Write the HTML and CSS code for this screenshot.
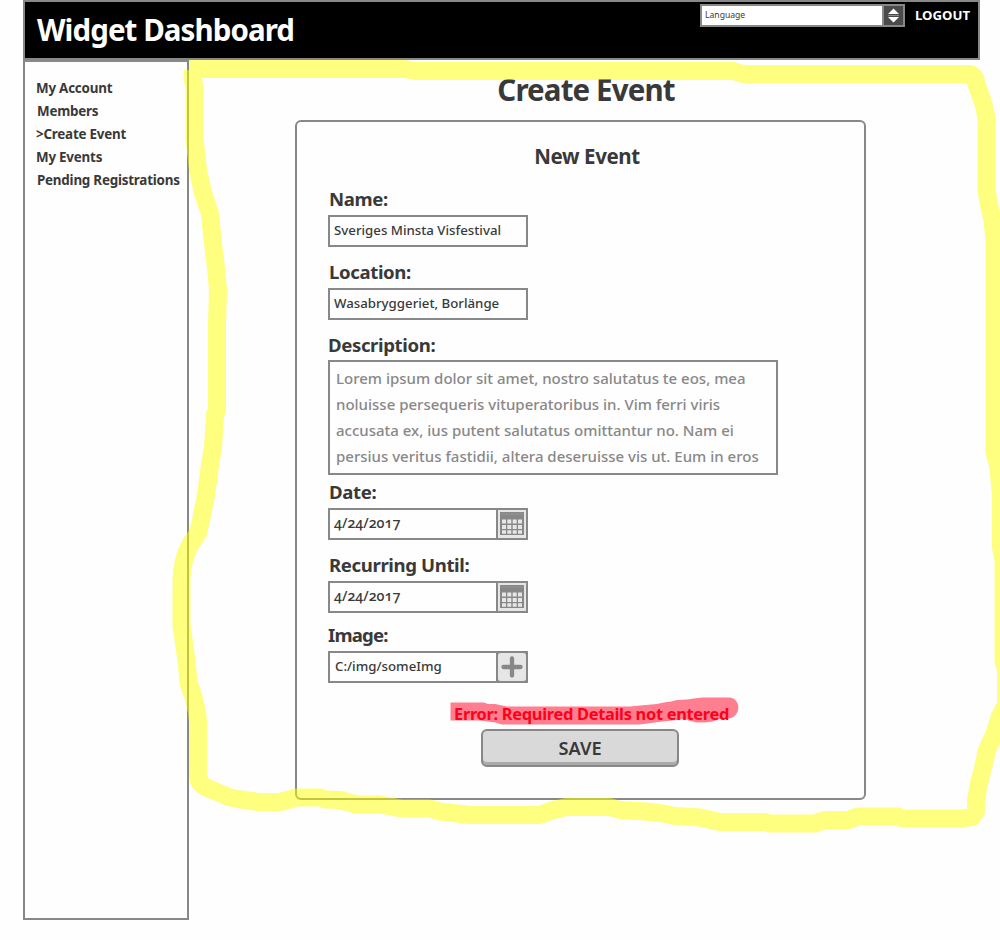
FILE: index.html
```html
<!DOCTYPE html>
<html lang="en">
<head>
<meta charset="utf-8">
<title>Widget Dashboard</title>
<link rel="stylesheet" href="styles.css">
</head>
<body>
<div class="page">
  <header class="topbar">
    <h1 class="brand">Widget Dashboard</h1>
    <div class="tools">
      <div class="select">
        <span class="select-value">Language</span>
        <span class="select-arrows">
          <svg width="19" height="19" viewBox="0 0 19 19"><path d="M4 8 9.500 2.500l5.500 5.500z M4 11h11L9.500 16.500z" fill="#fff"/><path d="M4 9.500h11" stroke="#888"/></svg>
        </span>
      </div>
      <a class="logout">LOGOUT</a>
    </div>
  </header>
  <div class="body">
    <nav class="sidebar">
      <a>My Account</a>
      <a class="in">Members</a>
      <a>&gt;Create Event</a>
      <a>My Events</a>
      <a class="in">Pending Registrations</a>
    </nav>
    <main class="content">
      <h2 class="heading">Create Event</h2>
      <form class="card">
        <h3 class="subheading">New Event</h3>
        <div class="field"><label class="in">Name:</label><div class="input"><span>Sveriges Minsta Visfestival</span></div></div>
        <div class="field"><label class="in">Location:</label><div class="input"><span>Wasabryggeriet, Borlänge</span></div></div>
        <div class="field field-text"><label>Description:</label>
          <div class="textarea">Lorem ipsum dolor sit amet, nostro salutatus te eos, mea<br>noluisse persequeris vituperatoribus in. Vim ferri viris<br>accusata ex, ius putent salutatus omittantur no. Nam ei<br>persius veritus fastidii, altera deseruisse vis ut. Eum in eros</div></div>
        <div class="field"><label class="in">Date:</label>
          <div class="input"><span class="date">4/24/2017</span>
            <i class="addon"><svg width="28" height="28" viewBox="0 0 28 28"><path d="M2 2h24v23H2z" fill="#888"/><path d="M3 4h22" stroke="#949494"/><path d="M4 9.500h4v4H4zm5.300 0h4v4h-4zm5.400 0h4v4h-4zm5.300 0h4v4h-4zM4 15h4v4H4zm5.300 0h4v4h-4zm5.400 0h4v4h-4zm5.300 0h4v4h-4zM4 20.200h4v3.500H4zm5.300 0h4v3.500h-4zm5.400 0h4v3.500h-4zm5.300 0h4v3.500h-4z" fill="#e6e6e6"/></svg></i></div></div>
        <div class="field field-recurring"><label class="in">Recurring Until:</label>
          <div class="input"><span class="date">4/24/2017</span>
            <i class="addon"><svg width="28" height="28" viewBox="0 0 28 28"><path d="M2 2h24v23H2z" fill="#888"/><path d="M3 4h22" stroke="#949494"/><path d="M4 9.500h4v4H4zm5.300 0h4v4h-4zm5.400 0h4v4h-4zm5.300 0h4v4h-4zM4 15h4v4H4zm5.300 0h4v4h-4zm5.400 0h4v4h-4zm5.300 0h4v4h-4zM4 20.200h4v3.500H4zm5.300 0h4v3.500h-4zm5.400 0h4v3.500h-4zm5.300 0h4v3.500h-4z" fill="#e6e6e6"/></svg></i></div></div>
        <div class="field"><label class="image-label">Image:</label>
          <div class="input"><span class="path">C:/img/someImg</span>
            <i class="addon"><svg width="28" height="28" viewBox="0 0 28 28"><path d="M0 0h28v28H0z" fill="#888"/><rect width="28" height="28" rx="2.500" fill="#e6e6e6"/><path d="M14 5.500v17M5.500 14h17" stroke="#888" stroke-width="4.300" stroke-linecap="round"/></svg></i></div></div>
        <p class="error">Error: Required Details not entered</p>
        <button class="save" type="button">SAVE</button>
      </form>
    </main>
  </div>
  <svg class="marker" width="1000" height="940" viewBox="0 0 1000 940" fill="none" stroke-width="18" stroke-linejoin="round">
    <path stroke="#ff0" stroke-opacity=".5" d="M189 69H405L415 71H733L743 74H967Q976 74 976 83L979 91 984 106 986.500 118V190L989 205 992.500 220 994.500 240V452L998 465 1001 495V547L1003.500 560V660L1006 670V705L1000 716 994 735 987 750 983 768 979 783 976 800V811L972 817 960 818.500H902L898 816.500H858L848 820H825L815 823.500H770L765 822H720L700 817.500 675 816 660 813 645 811.500 620 810 610 807H566L550 811 540 815H470L440 811.500 430 808.500H402L380 804.500H356L340 800 325 799.500 320 797.500H297L280 802H258L238 799 230 797.500 205 787Q198 783 198 775V722L197 712 193 695 188.500 683 187 665 185 650 181.500 626V580Q182 560 190 545L198 533 201 520 206 495 210 465 213 448 215 415 217 410V323L218 290 216 268 213.500 248 210 214 203 193 198 170 194.500 138V88L193 80V70"/>
    <path fill="#ff0022" fill-opacity=".5" stroke="none" d="M450.500 702.500H484L488 704 495 704 507 706.500H630L640 705.500 657 704 664 702.500 671 701.500 677 700 687 699.500 694 698.500 702 697.500H729C742 698 741 717 729 718.500H721L713 721.500 705 722.500H697L690 721 685 719 672 720.500 658 722 640 724.500H502L495 722.500 480 720.500H450.500z"/>
  </svg>
</div>
</body>
</html>
```
FILE: styles.css
```css
* { box-sizing: border-box; }
body {
  margin: 0;
  background: #fefefe;
  color: #393939;
  font-family: "Noto Sans", "Open Sans", sans-serif;
  font-weight: 700;
}
h1, h2, h3, p { margin: 0; font-weight: 700; }
.page { position: relative; width: 1000px; height: 940px; padding-left: 23px; overflow: hidden; }
.topbar {
  display: flex;
  justify-content: space-between;
  width: 957px;
  height: 60px;
  padding: 2px 8px 0 11px;
  border: 2px solid #888;
  background: #000;
  color: #fff;
}
.brand { padding-left: 1px; font-size: 29.500px; letter-spacing: -.93px; line-height: 51px; white-space: nowrap; }
.tools { display: flex; align-items: flex-start; gap: 10px; }
.select { display: flex; width: 205px; height: 23px; border: 2px solid #888; background: #fff; }
.select-value { flex: 1; padding-left: 3px; font-size: 8.600px; font-weight: 400; line-height: 18px; color: #393939; }
.select-arrows { width: 21px; border-left: 2px solid #888; background: #4a4a4a; }
.select-arrows svg { display: block; }
.logout { width: 55px; font-size: 13.200px; line-height: 22px; }
.body { display: flex; }
.sidebar {
  display: flex;
  flex-direction: column;
  width: 166px;
  height: 860px;
  padding: 15px 0 0 11px;
  border: 2px solid #888;
  font-size: 13.400px;
  letter-spacing: -.22px;
  line-height: 23px;
  white-space: nowrap;
}
.in { padding-left: 1px; }
.content { padding-left: 106px; }
.heading { height: 60px; padding: 4px 0 0 11px; font-size: 29.500px; letter-spacing: -.88px; line-height: 51px; text-align: center; }
.card {
  display: flex;
  flex-direction: column;
  width: 571px;
  height: 680px;
  padding: 20px 31px 0;
  border: 2px solid #888;
  border-radius: 6px;
}
.subheading { margin-bottom: 17px; padding-left: 13px; font-size: 20.500px; letter-spacing: -.4px; line-height: 28px; text-align: center; }
.field { margin-bottom: 13px; }
.field label { display: block; height: 28px; font-size: 18.600px; letter-spacing: -.38px; line-height: 24px; }
.field .image-label { letter-spacing: -.8px; }
.input {
  display: flex;
  justify-content: space-between;
  width: 200px;
  height: 32px;
  padding-left: 4px;
  border: 2px solid #888;
  font-size: 13.250px;
  font-weight: 500;
  line-height: 26px;
  white-space: nowrap;
}
.date { font-size: 14.200px; font-weight: 500; font-variant-numeric: oldstyle-nums; }
.path { padding-left: 1px; }
.addon { width: 30px; border-left: 2px solid #888; background: #e6e6e6; }
.addon svg { display: block; }
.field-text { margin-bottom: 5px; }
.field-text label { height: 27px; }
.textarea {
  width: 450px;
  height: 115px;
  padding: 3px 6px;
  border: 2px solid #888;
  color: #888;
  font-size: 15px;
  font-weight: 500;
  line-height: 26px;
  white-space: nowrap;
}
.field-recurring { margin-bottom: 10px; }
.error { margin: 7px 0 3px; padding-left: 126px; color: #ff0014; font-size: 16.400px; letter-spacing: -.3px; line-height: 22px; }
.save {
  width: 198px;
  height: 38px;
  margin: 1px 0 0 153px;
  padding: 0;
  border: 2px solid #888;
  border-radius: 6px;
  background: #d9d9d9;
  box-shadow: inset 0 -3px #aaa;
  color: #393939;
  font: 600 18.200px/32px "Noto Sans", sans-serif;
}
.marker { position: absolute; top: 0; left: 0; pointer-events: none; }
```
